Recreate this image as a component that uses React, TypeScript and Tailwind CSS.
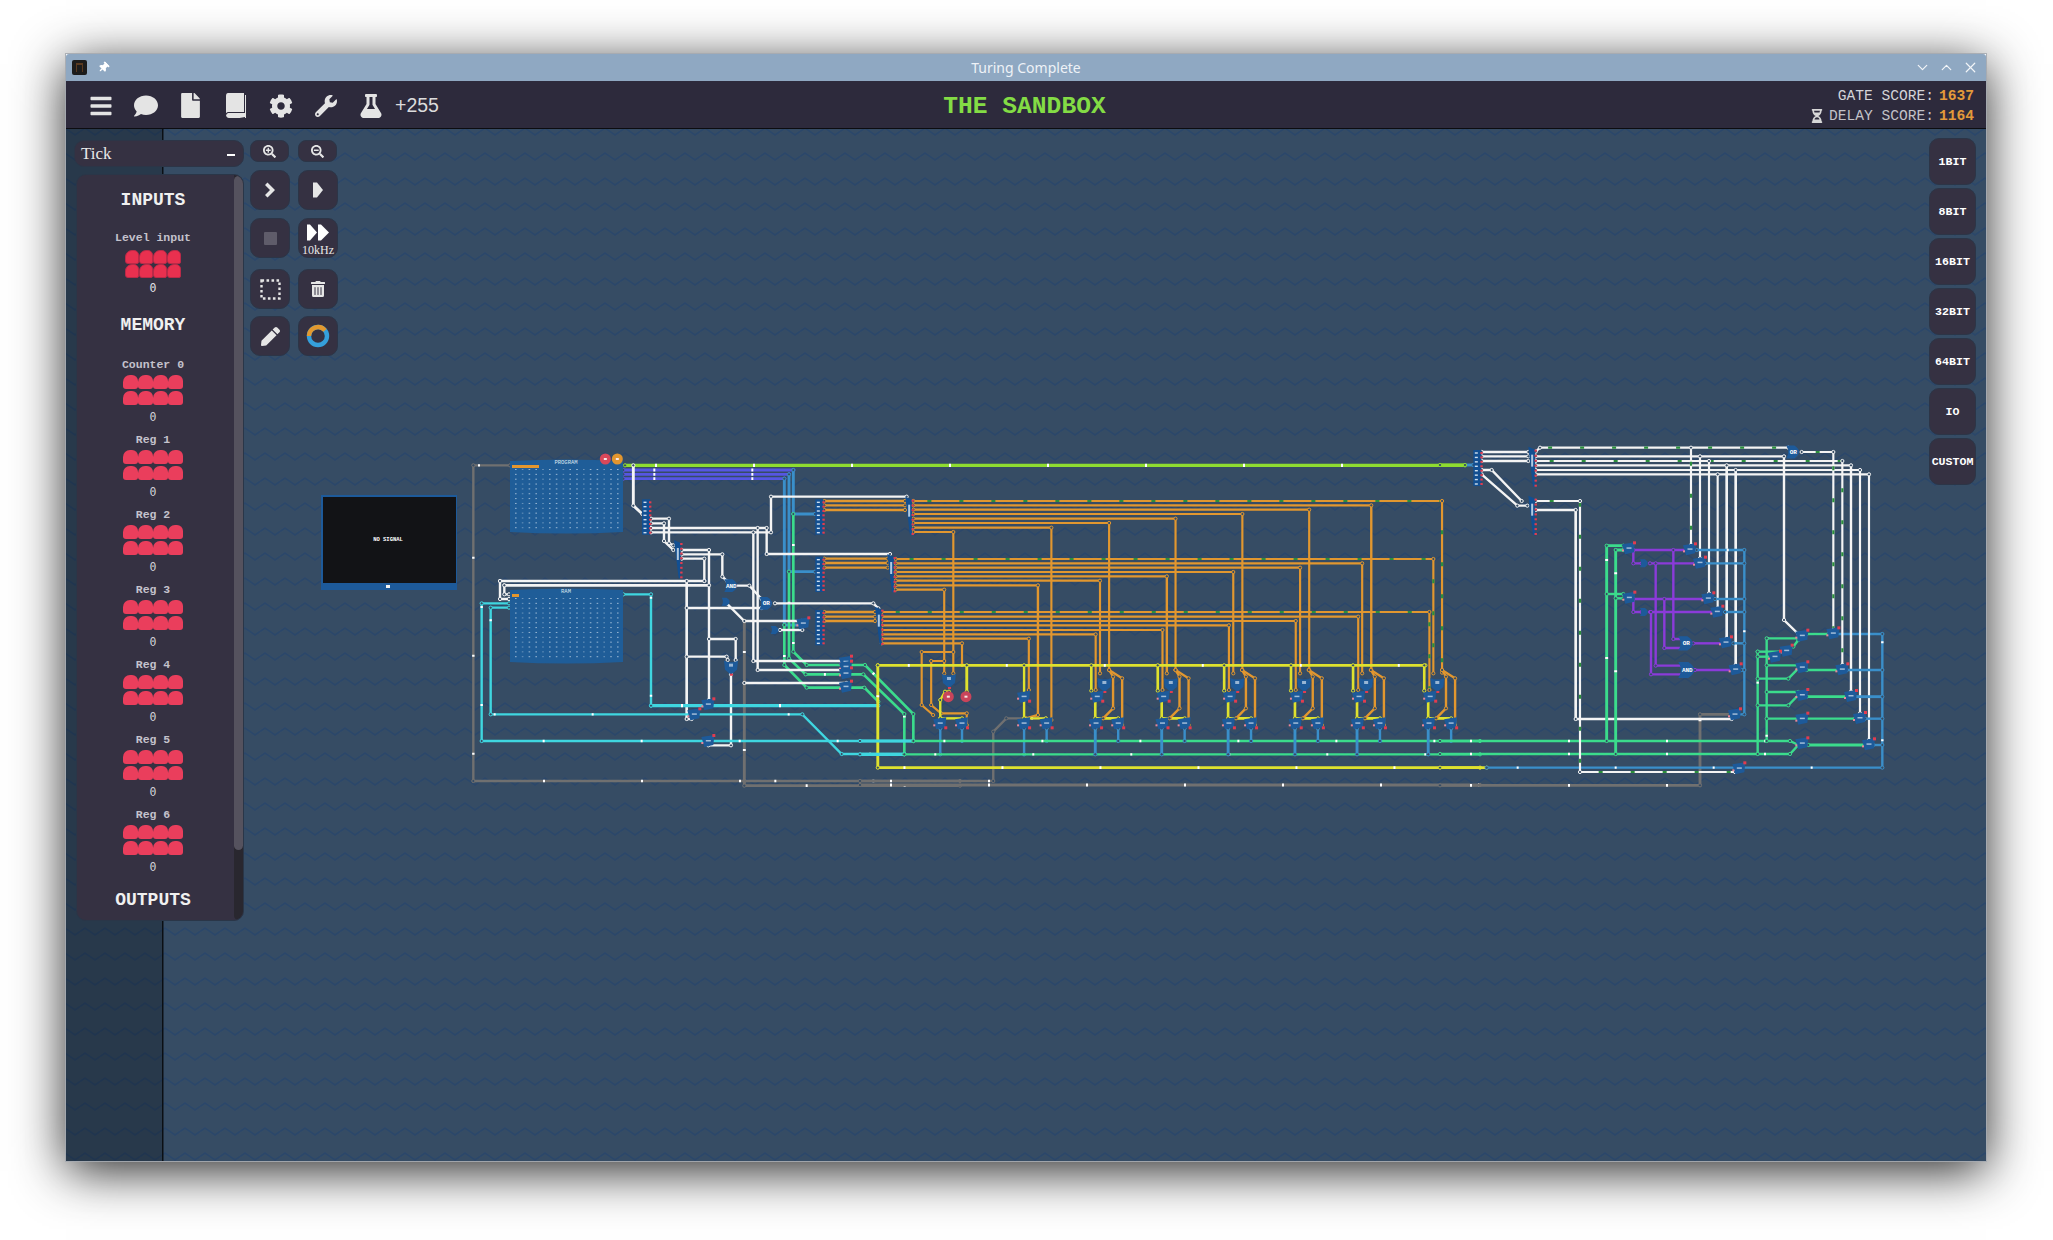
import React from 'react';
import { ChevronDown, ChevronUp, X } from 'lucide-react';
import {
  FaBars, FaCog, FaComment, FaFile, FaFlask, FaHourglassHalf, FaPen,
  FaSearchMinus, FaSearchPlus, FaThumbtack, FaTrashAlt, FaWrench,
} from 'react-icons/fa';

const WHITE = '#f4f4f4';
const ORANGE = '#e2972f';
const CYAN = '#3fd6e0';
const GREEN = '#3bdc8c';
const BLUE = '#3a8fca';
const YELLOW = '#dfe22e';
const PURPLE = '#8b3bd9';
const LIME = '#8fdc30';
const GREY = '#707070';
const INDIGO = '#5656e2';

type Map = (x: number, y: number) => [number, number];
type Wire = [string, number, number[], ('g' | 'l')?];

// each wire list is written in the coordinates of the crop it was read from
const mapA: Map = (x, y) => [460 + x / 3, 440 + y / 3];
const mapB: Map = (x, y) => [860 + x / 2.529, 480 + y / 3];
const mapC: Map = (x, y) => [1440 + x / 3, 430 + y / 3];

const wiresA: Wire[] = [
  [GREY, 2, [150, 76, 40, 76, 40, 1023, 853, 1023], 'l'],
  [GREY, 2, [853, 1023, 1500, 1023], 'l'],
  [GREY, 2.4, [853, 543, 853, 1037, 1500, 1037], 'l'],
  [INDIGO, 2.4, [490, 90, 1000, 90], 'l'],
  [INDIGO, 2.4, [490, 103, 987, 103], 'l'],
  [INDIGO, 2.4, [490, 116, 973, 116], 'l'],
  [BLUE, 2.4, [1000, 90, 1000, 222, 1065, 222]],
  [BLUE, 2.4, [987, 103, 987, 395, 1065, 395]],
  [BLUE, 2.4, [973, 116, 973, 555, 1025, 555]],
  [LIME, 2.6, [495, 76, 3015, 76], 'l'],
  [GREEN, 2.2, [1000, 222, 1000, 635, 1040, 675, 1215, 675, 1360, 822, 1360, 903], 'l'],
  [GREEN, 2.2, [987, 395, 987, 655, 1037, 703, 1210, 703, 1333, 822, 1333, 942], 'l'],
  [GREEN, 2.2, [973, 555, 973, 675, 1040, 743, 1213, 743, 1255, 785], 'l'],
  [WHITE, 2.4, [520, 76, 520, 197, 547, 222]],
  [WHITE, 2, [573, 236, 627, 236, 627, 310, 640, 316]],
  [WHITE, 2, [573, 250, 612, 250, 612, 303, 640, 330]],
  [WHITE, 2, [573, 264, 920, 264, 920, 342, 1290, 342]],
  [WHITE, 2, [573, 277, 933, 277, 933, 170, 1340, 170]],
  [WHITE, 2, [893, 264, 893, 690, 1160, 690]],
  [WHITE, 2, [880, 277, 880, 663, 1160, 663]],
  [WHITE, 2, [665, 330, 747, 330, 747, 780]],
  [WHITE, 2, [665, 343, 787, 343, 787, 410, 803, 425]],
  [WHITE, 2, [665, 356, 733, 356, 733, 423]],
  [WHITE, 2, [120, 423, 733, 423]],
  [WHITE, 2.2, [133, 436, 747, 436]],
  [WHITE, 2, [120, 423, 120, 477, 147, 477]],
  [WHITE, 2, [133, 436, 133, 463, 147, 463]],
  [WHITE, 2.2, [680, 423, 680, 837, 695, 837]],
  [WHITE, 2, [680, 504, 905, 504]],
  [WHITE, 2, [680, 650, 800, 650, 803, 660]],
  [WHITE, 2, [747, 597, 827, 597, 827, 660]],
  [WHITE, 2, [820, 437, 868, 437, 905, 477]],
  [WHITE, 2, [945, 490, 1240, 490, 1255, 505]],
  [WHITE, 2, [800, 490, 853, 543, 1025, 543]],
  [WHITE, 2, [813, 703, 813, 916, 745, 916]],
  [WHITE, 2, [853, 729, 1160, 729]],
  [WHITE, 2, [960, 570, 1027, 570]],
  [CYAN, 2, [490, 463, 573, 463, 573, 797], 'l'],
  [CYAN, 2.6, [573, 797, 1255, 797], 'l'],
  [CYAN, 2, [147, 490, 65, 490, 65, 903, 1360, 903], 'l'],
  [CYAN, 2, [147, 503, 92, 503, 92, 823, 1027, 823, 1145, 942, 1333, 942], 'l'],
  [ORANGE, 2, [1093, 183, 1335, 183]],
  [ORANGE, 2, [1093, 196, 1335, 196]],
  [ORANGE, 2, [1093, 210, 1335, 210]],
  [ORANGE, 2, [1093, 356, 1283, 356]],
  [ORANGE, 2, [1093, 369, 1283, 369]],
  [ORANGE, 2, [1093, 383, 1283, 383]],
  [ORANGE, 2, [1093, 516, 1245, 516]],
  [ORANGE, 2, [1093, 530, 1245, 530]],
  [ORANGE, 2, [1093, 543, 1245, 543]],
];

const muxBases = [585, 753, 921, 1090, 1247, 1427];

const wiresB: Wire[] = [
  [ORANGE, 1.8, [135, 63, 1472, 63, 1472, 578], 'g'],
  [ORANGE, 2, [135, 76, 1293, 76, 1293, 570]],
  [ORANGE, 1.8, [135, 89, 1136, 89, 1136, 570]],
  [ORANGE, 1.8, [135, 102, 967, 102, 967, 570]],
  [ORANGE, 1.8, [135, 116, 798, 116, 798, 570]],
  [ORANGE, 1.8, [135, 129, 630, 129, 630, 570]],
  [ORANGE, 1.8, [135, 143, 484, 143, 484, 720]],
  [ORANGE, 1.8, [135, 156, 236, 156, 236, 580]],
  [ORANGE, 1.8, [90, 237, 1450, 237, 1450, 580], 'g'],
  [ORANGE, 1.8, [90, 250, 1270, 250, 1270, 580]],
  [ORANGE, 1.8, [90, 263, 1113, 263, 1113, 580]],
  [ORANGE, 1.8, [90, 276, 944, 276, 944, 580]],
  [ORANGE, 2, [90, 289, 776, 289, 776, 580]],
  [ORANGE, 1.8, [90, 302, 607, 302, 607, 580]],
  [ORANGE, 2, [90, 316, 450, 316, 450, 705, 420, 715]],
  [ORANGE, 1.8, [90, 329, 213, 329, 213, 580]],
  [ORANGE, 1.8, [55, 396, 1440, 396, 1440, 630], 'g'],
  [ORANGE, 1.8, [55, 410, 1260, 410, 1260, 630]],
  [ORANGE, 1.8, [55, 423, 1102, 423, 1102, 630]],
  [ORANGE, 1.8, [55, 436, 933, 436, 933, 630]],
  [ORANGE, 1.8, [55, 450, 765, 450, 765, 630]],
  [ORANGE, 1.8, [55, 463, 596, 463, 596, 630]],
  [ORANGE, 1.8, [55, 476, 427, 476, 427, 630]],
  [ORANGE, 1.8, [55, 490, 258, 490, 258, 555]],
  [ORANGE, 1.8, [236, 516, 156, 516, 156, 675, 185, 705]],
  [ORANGE, 1.8, [213, 543, 180, 543, 180, 675, 205, 700, 270, 700, 270, 735]],
  [GREY, 2, [0, 903, 337, 903, 337, 755, 370, 715, 470, 715], 'l'],
  [GREY, 2.4, [0, 915, 1568, 915], 'l'],
  [YELLOW, 2.4, [45, 556, 1430, 556], 'l'],
  [YELLOW, 2.4, [45, 556, 45, 863, 1568, 863], 'l'],
  [YELLOW, 2.4, [270, 556, 270, 635]],
  [YELLOW, 2, [203, 715, 203, 660, 215, 635, 225, 635]],
  [YELLOW, 2, [203, 715, 258, 715]],
  [YELLOW, 2, [415, 556, 415, 715, 470, 715]],
  [BLUE, 2, [203, 745, 203, 823], 'l'],
  [BLUE, 2, [258, 745, 258, 783], 'l'],
  [BLUE, 2, [415, 745, 415, 823], 'l'],
  [BLUE, 2, [472, 745, 472, 783], 'l'],
  [CYAN, 2.6, [0, 783, 135, 783]],
  [CYAN, 2.6, [0, 823, 112, 823]],
  [GREEN, 2, [135, 783, 1568, 783], 'l'],
  [GREEN, 2, [112, 823, 1568, 823], 'l'],
  ...muxBases.flatMap((x): Wire[] => [
    [YELLOW, 2.2, [x, 556, x, 632]],
    [YELLOW, 2.2, [x + 10, 655, x + 10, 715, x + 68, 715]],
    [ORANGE, 2, [x + 45, 570, x + 78, 595, x + 78, 735]],
    [ORANGE, 2, [x + 45, 570, x + 55, 590, x + 55, 685, x + 30, 715]],
    [BLUE, 2.4, [x + 10, 745, x + 10, 823], 'l'],
    [BLUE, 2, [x + 68, 745, x + 68, 783], 'l'],
  ]),
];

const wiresC: Wire[] = [
  [BLUE, 2.4, [75, 105, 100, 105]],
  [LIME, 2.6, [0, 105, 75, 105]],
  [GREY, 2.4, [0, 1066, 780, 1066, 780, 853, 870, 853], 'l'],
  [GREEN, 2, [0, 933, 1050, 933, 1075, 945], 'l'],
  [GREEN, 2, [0, 972, 1050, 972, 1075, 945], 'l'],
  [YELLOW, 2.4, [0, 1013, 140, 1013]],
  [BLUE, 2, [140, 1013, 1327, 1013, 1327, 612, 1180, 612], 'l'],
  [WHITE, 2, [125, 66, 265, 66]],
  [WHITE, 2, [125, 79, 265, 79]],
  [WHITE, 2, [125, 93, 265, 93]],
  [WHITE, 2, [125, 120, 155, 120, 245, 213]],
  [WHITE, 2, [125, 133, 232, 227, 262, 227]],
  [WHITE, 1.8, [287, 65, 300, 53, 1045, 53], 'g'],
  [WHITE, 2, [287, 79, 1032, 79, 1032, 570, 1075, 612]],
  [WHITE, 1.8, [287, 93, 1207, 93, 1207, 705], 'g'],
  [WHITE, 2, [287, 106, 1233, 106, 1233, 785]],
  [WHITE, 1.8, [287, 120, 1260, 120, 1260, 850]],
  [WHITE, 1.8, [287, 133, 1287, 133, 1287, 930]],
  [WHITE, 1.8, [753, 53, 753, 345], 'g'],
  [WHITE, 1.8, [780, 79, 780, 385]],
  [WHITE, 1.8, [807, 93, 807, 490]],
  [WHITE, 1.8, [833, 133, 833, 535]],
  [WHITE, 2.2, [860, 106, 860, 625]],
  [WHITE, 2.2, [887, 120, 887, 705]],
  [WHITE, 1.8, [1085, 66, 1180, 66, 1180, 600], 'g'],
  [WHITE, 1.8, [287, 213, 420, 213, 420, 1026, 885, 1026], 'g'],
  [WHITE, 2.2, [287, 240, 407, 240, 407, 867, 875, 867]],
  [GREEN, 2.4, [550, 347, 500, 347, 500, 933], 'l'],
  [GREEN, 2.4, [550, 360, 527, 360, 527, 972], 'l'],
  [GREEN, 2, [500, 492, 550, 492]],
  [GREEN, 2, [527, 505, 550, 505]],
  [PURPLE, 2, [580, 360, 740, 360]],
  [PURPLE, 2, [580, 360, 580, 400, 605, 400]],
  [PURPLE, 2, [630, 400, 765, 400]],
  [PURPLE, 2, [647, 400, 647, 707, 725, 707]],
  [PURPLE, 2, [580, 507, 790, 507]],
  [PURPLE, 2, [580, 507, 580, 546, 605, 546]],
  [PURPLE, 2, [630, 546, 820, 546]],
  [PURPLE, 2, [633, 546, 633, 733, 725, 733]],
  [PURPLE, 2, [700, 360, 700, 627, 725, 627]],
  [PURPLE, 2, [673, 507, 673, 654, 725, 654]],
  [PURPLE, 2, [760, 640, 845, 640]],
  [PURPLE, 2.2, [765, 720, 875, 720]],
  [BLUE, 2, [770, 360, 913, 360, 913, 853, 890, 853], 'l'],
  [BLUE, 2, [795, 400, 913, 400]],
  [BLUE, 2, [825, 507, 913, 507]],
  [BLUE, 2, [855, 546, 913, 546]],
  [BLUE, 2, [880, 640, 913, 640]],
  [BLUE, 2, [905, 720, 913, 720]],
  [BLUE, 2, [1220, 720, 1327, 720]],
  [BLUE, 2.4, [1245, 800, 1327, 800]],
  [BLUE, 2, [1275, 866, 1327, 866]],
  [BLUE, 2, [1300, 945, 1327, 945]],
  [GREEN, 2, [1075, 625, 980, 625, 980, 933], 'l'],
  [GREEN, 2, [953, 665, 1030, 665]],
  [GREEN, 2, [953, 665, 953, 972], 'l'],
  [GREEN, 2, [953, 680, 1000, 680]],
  [GREEN, 2, [980, 706, 1075, 706]],
  [GREEN, 2, [953, 746, 1045, 746, 1075, 715]],
  [GREEN, 2, [980, 786, 1075, 786]],
  [GREEN, 2, [953, 826, 1045, 826, 1075, 795]],
  [GREEN, 2, [980, 866, 1245, 866]],
  [GREEN, 2, [1100, 612, 1165, 612]],
  [GREEN, 2, [1100, 720, 1195, 720]],
  [GREEN, 2.4, [1100, 800, 1220, 800]],
  [GREEN, 2.4, [1105, 945, 1275, 945]],
  [GREEN, 2, [1060, 650, 1075, 630]],
];

function Wires({ wires, map }: { wires: Wire[]; map: Map }) {
  return (
    <g fill="none">
      {wires.map(([color, width, pts, mark], i) => {
        const points: [number, number][] = [];
        for (let k = 0; k < pts.length; k += 2) points.push(map(pts[k], pts[k + 1]));
        const line = points.map((p) => p.join(',')).join(' ');
        const w = width * 1.2;
        return (
          <g key={i}>
            <polyline points={line} stroke={color} strokeWidth={w} />
            {mark === 'g' && <polyline points={line} stroke="#2b8f3c" strokeWidth={w} strokeDasharray="4 28" strokeDashoffset={-14} />}
            {mark === 'l' && <polyline points={line} stroke="#ffffff" strokeWidth={w} strokeDasharray="2 96" strokeDashoffset={-30} />}
            {points.map((p, k) => (
              <circle key={k} cx={p[0]} cy={p[1]} r={1.6} fill="#364c64" stroke={color} strokeWidth={1} />
            ))}
          </g>
        );
      })}
    </g>
  );
}

function Mux({ at, pin = 'top' }: { at: [number, number]; pin?: 'top' | 'bottom' }) {
  const [x, y] = at;
  return (
    <g>
      <path d={`M${x - 7} ${y - 4} L${x + 6} ${y - 6} L${x + 5} ${y + 4} L${x - 4} ${y + 6} Z`} fill="#1d5a9a" />
      <rect x={x - 2.5} y={y - 1} width={5} height={1.5} fill="#d9e6f2" opacity={0.7} />
      <rect x={x + 4} y={pin === 'top' ? y - 7 : y + 3} width={3} height={3} fill="#e23c4f" />
      <rect x={x - 7} y={y + 1} width={2} height={2} fill="#e9879a" />
    </g>
  );
}

function Gate({ at, label, r = 8 }: { at: [number, number]; label: string; r?: number }) {
  const [x, y] = at;
  return (
    <g>
      <path d={`M${x - r} ${y - r * 0.8} H${x} Q${x + r * 1.2} ${y} ${x} ${y + r * 0.8} H${x - r} Q${x - r * 0.5} ${y} ${x - r} ${y - r * 0.8} Z`} fill="#1d5a9a" />
      <text x={x - 1} y={y + 2} textAnchor="middle" fontSize={6} fontWeight={700} fontFamily="Liberation Mono, monospace" fill="#ffffff">{label}</text>
    </g>
  );
}

// down pointing gate of the bit columns
function DownGate({ at }: { at: [number, number] }) {
  const [x, y] = at;
  return (
    <g>
      <path d={`M${x - 7} ${y - 6} Q${x} ${y - 3} ${x + 7} ${y - 6} L${x + 6} ${y + 3} L${x} ${y + 8} L${x - 6} ${y + 3} Z`} fill="#1d5a9a" />
      <rect x={x - 2} y={y - 3} width={4} height={3} fill="#d9e6f2" opacity={0.65} />
      <rect x={x - 1} y={y + 7} width={3} height={2} fill="#e23c4f" />
    </g>
  );
}

function Decoder({ map, x, y, h = 106 }: { map: Map; x: number; y: number; h?: number }) {
  const [ax, ay] = map(x, y);
  const [bx, by] = map(x + 24, y + h);
  const n = 8;
  return (
    <g>
      <rect x={ax} y={ay} width={bx - ax} height={by - ay} fill="#124f92" />
      {Array.from({ length: n }, (_, i) => {
        const py = ay + 3 + (i * (by - ay - 5)) / (n - 1);
        return (
          <g key={i}>
            <rect x={ax + 1.5} y={py - 0.7} width={3} height={1.4} fill="#cfe0f0" />
            <rect x={bx - 1} y={py - 1} width={2.4} height={2} fill="#e23c4f" />
          </g>
        );
      })}
    </g>
  );
}

function Demux({ map, x, y, w = 20, h = 112 }: { map: Map; x: number; y: number; w?: number; h?: number }) {
  const [ax, ay] = map(x, y);
  const [bx, by] = map(x + w, y + h);
  return (
    <g>
      <path d={`M${ax} ${ay} L${bx} ${ay + 3} L${bx} ${by} L${bx - 2} ${by} Z`} fill="#124f92" />
      <rect x={(ax + bx) / 2 - 0.5} y={ay + 8} width={2} height={12} fill="#cfe0f0" opacity={0.85} />
      {Array.from({ length: 8 }, (_, i) => (
        <rect key={i} x={bx - 0.5} y={ay + 3 + i * ((by - ay - 5) / 7)} width={2.4} height={2} fill="#e23c4f" />
      ))}
    </g>
  );
}

function MemoryBlock({ x, y, h, rows, label, bar }: { x: number; y: number; h: number; rows: number; label: string; bar: number }) {
  return (
    <g>
      <path d={`M${x} ${y + 1} Q${x + 56} ${y - 2} ${x + 113} ${y + 1} V${y + h - 1} Q${x + 56} ${y + h + 2} ${x} ${y + h - 1} Z`} fill="#1f5d98" />
      <rect x={x + 2} y={y + 5} width={bar} height={3} fill="#e2972f" />
      {Array.from({ length: rows }, (_, r) =>
        Array.from({ length: 16 }, (_, c) => (
          <rect key={`${r}-${c}`} x={x + 5 + c * 6.8} y={y + 9 + r * 4.85} width={1.6} height={1} fill="#d8e6f2" opacity={c % 3 === 1 ? 0.4 : 0.65} />
        )),
      )}
      <text x={x + 56} y={y + 4} textAnchor="middle" fontSize={5.5} fontFamily="Liberation Mono, monospace" fill="#dbe6f0">{label}</text>
    </g>
  );
}

function Led({ at, color, r = 5.5 }: { at: [number, number]; color: string; r?: number }) {
  return (
    <g>
      <circle cx={at[0]} cy={at[1]} r={r} fill={color} />
      <rect x={at[0] - 1.5} y={at[1] - 1} width={3} height={2} fill="#f6e6e6" />
    </g>
  );
}

function Canvas() {
  return (
    <svg className="absolute inset-0" width={1920} height={1032} viewBox="66 129 1920 1032">
      <defs>
        <pattern id="waves" x={0} y={0} width={20} height={25} patternUnits="userSpaceOnUse">
          <path d="M0 6.5 L5 3 L15 10 L20 6.5" fill="none" stroke="#2b476a" strokeWidth={1.7} />
        </pattern>
      </defs>
      <rect x={66} y={129} width={1920} height={1032} fill="#364c64" />
      <rect x={66} y={129} width={1920} height={1032} fill="url(#waves)" />
      <rect x={66} y={129} width={97} height={1032} fill="#000000" opacity={0.25} />
      <rect x={162} y={129} width={1.5} height={1032} fill="#0b0f14" />

      {/* console */}
      <rect x={321} y={495} width={136} height={95} fill="#1d5a9a" />
      <rect x={323} y={497} width={133} height={86} fill="#121316" />
      <rect x={386} y={585} width={4} height={3} fill="#f4f4f4" />
      <text x={388} y={541} textAnchor="middle" fontSize={5.5} fontWeight={700} fontFamily="Liberation Mono, monospace" fill="#ffffff">NO SIGNAL</text>

      <Wires wires={wiresA} map={mapA} />
      <Wires wires={wiresB} map={mapB} />
      <Wires wires={wiresC} map={mapC} />

      <MemoryBlock x={510} y={460} h={73} rows={13} label="PROGRAM" bar={27} />
      <MemoryBlock x={510} y={589} h={74} rows={13} label="RAM" bar={7} />
      <Led at={mapA(436, 57)} color="#d9485a" />
      <Led at={mapA(472, 57)} color="#e2962f" />
      <Led at={mapA(1465, 770)} color="#c9445a" />
      <Led at={mapB(268, 650)} color="#c9445a" />

      <Decoder map={mapA} x={546} y={178} />
      <Decoder map={mapA} x={1066} y={178} />
      <Decoder map={mapA} x={1066} y={350} />
      <Decoder map={mapA} x={1066} y={510} />
      <Decoder map={mapC} x={100} y={60} h={108} />
      <Demux map={mapA} x={642} y={300} h={115} />
      <Demux map={mapA} x={1336} y={170} h={115} />
      <Demux map={mapA} x={1282} y={342} h={115} />
      <Demux map={mapA} x={1245} y={500} h={115} />
      <Demux map={mapC} x={265} y={50} h={120} />
      <Demux map={mapC} x={265} y={197} h={118} />

      <Gate at={mapA(817, 437)} label="AND" />
      <Gate at={mapA(922, 490)} label="OR" />
      <Gate at={mapA(800, 485)} label="" r={5} />
      <Gate at={mapA(947, 570)} label="" r={5} />
      <DownGate at={mapA(813, 680)} />
      {([[745, 793], [703, 823], [745, 903], [1030, 550], [1158, 665], [1158, 680], [1158, 700], [1158, 740]] as [number, number][]).map((p, i) => (
        <Mux key={i} at={mapA(p[0], p[1])} />
      ))}
      <DownGate at={mapB(225, 600)} />
      <Mux at={mapB(415, 650)} pin="bottom" />
      {[203, 258, 415, 472].map((x) => (
        <Mux key={x} at={mapB(x, 730)} pin="bottom" />
      ))}
      {muxBases.map((x) => (
        <g key={x}>
          <DownGate at={mapB(x + 33, 612)} />
          <Mux at={mapB(x + 15, 650)} pin="bottom" />
          <Mux at={mapB(x + 12, 730)} pin="bottom" />
          <Mux at={mapB(x + 68, 730)} pin="bottom" />
        </g>
      ))}
      <Gate at={mapC(742, 640)} label="OR" r={9} />
      <Gate at={mapC(745, 720)} label="AND" r={10} />
      <Gate at={mapC(1063, 66)} label="OR" r={8} />
      <Gate at={mapC(615, 400)} label="" r={5} />
      <Gate at={mapC(615, 546)} label="" r={5} />
      {([[567, 355], [568, 503], [750, 358], [780, 398], [805, 505], [832, 545], [858, 637], [887, 718], [885, 853], [1180, 610], [1207, 718], [1233, 798], [1260, 864], [1287, 943], [1087, 617], [1040, 662], [1005, 680], [1087, 712], [1087, 795], [1087, 866], [1087, 940], [898, 1015]] as [number, number][]).map((p, i) => (
        <Mux key={i} at={mapC(p[0], p[1])} />
      ))}
    </svg>
  );
}

function Nibs({ small }: { small?: boolean }) {
  return (
    <div className={small ? 'grid grid-cols-[repeat(4,14px)] auto-rows-[14px]' : 'grid grid-cols-[repeat(4,15px)] auto-rows-[16px]'}>
      {Array.from({ length: 8 }, (_, i) => (
        <div
          key={i}
          className={
            small
              ? 'w-[14px] h-[14px] rounded-tl-[7px] rounded-tr-[5px] rounded-br-[2px] rounded-bl-[3px] bg-[#e9304f] border border-[#b92a48]'
              : 'w-[14.5px] h-[14px] rounded-tl-[7px] rounded-tr-[6px] rounded-br-[3px] rounded-bl-[3px] bg-[#ea3e5c]'
          }
        />
      ))}
    </div>
  );
}

function Heading({ children, className }: { children: string; className: string }) {
  return <div className={`font-['Liberation_Mono',monospace] font-bold text-[18px] leading-[24px] text-[#f0f0f0] ${className}`}>{children}</div>;
}

function Component({ name, first }: { name: string; first?: boolean }) {
  return (
    <div className={first ? 'flex flex-col items-center mt-[21px]' : 'flex flex-col items-center mt-[9px]'}>
      <div className="font-['Liberation_Mono',monospace] font-bold text-[11.5px] leading-[14px] text-[#c4c2cc]">{name}</div>
      <div className="mt-[3px]">
        <Nibs />
      </div>
      <div className="mt-[3px] font-['DejaVu_Sans_Mono',monospace] text-[11.5px] leading-[14px] text-[#d0d0d6]">0</div>
    </div>
  );
}

function Panel() {
  return (
    <div className="flex h-[747px] w-[168px] ml-[2px] mt-[7px] bg-[#353142] border border-[#2a3648] rounded-[10px] overflow-hidden">
      <div className="flex-1 flex flex-col items-center pt-[13px] pr-[5px]">
        <Heading className="">INPUTS</Heading>
        <div className="mt-[19px] font-['Liberation_Mono',monospace] font-bold text-[11.5px] leading-[14px] text-[#c4c2cc]">Level input</div>
        <div className="mt-[5px]">
          <Nibs small />
        </div>
        <div className="mt-[3px] font-['DejaVu_Sans_Mono',monospace] text-[11.5px] leading-[14px] text-[#e0e0e6]">0</div>
        <Heading className="mt-[18px]">MEMORY</Heading>
        <Component name="Counter 0" first />
        {['Reg 1', 'Reg 2', 'Reg 3', 'Reg 4', 'Reg 5', 'Reg 6'].map((n) => (
          <Component key={n} name={n} />
        ))}
        <Heading className="mt-[14px]">OUTPUTS</Heading>
      </div>
      <div className="w-[9px] bg-[#29272f] rounded-b-[6px]">
        <div className="h-[674px] mt-[1px] bg-[#55525e] rounded-[5px]" />
      </div>
    </div>
  );
}

function ToolButton({ children, className = '' }: { children: React.ReactNode; className?: string }) {
  return (
    <div className={`w-[40px] h-[40px] flex flex-col items-center justify-center bg-[#353142] border border-[#2c3547] rounded-[10px] text-[#e6e6e6] ${className}`}>
      {children}
    </div>
  );
}

function ZoomButton({ children }: { children: React.ReactNode }) {
  return (
    <div className="w-[39px] h-[22px] flex items-center justify-center bg-[#353142] border border-[#2c3547] rounded-[8px] text-[#e6e6e6]">
      {children}
    </div>
  );
}

function Tools() {
  return (
    <div className="flex flex-col ml-[6px]">
      <div className="flex gap-[9px]">
        <ZoomButton><FaSearchPlus size={13} /></ZoomButton>
        <ZoomButton><FaSearchMinus size={13} /></ZoomButton>
      </div>
      <div className="flex gap-[8px] mt-[8px]">
        <ToolButton>
          <svg width="12" height="16" viewBox="0 0 12 16"><path d="M1 3 L3.5 0.5 L11 8 L3.5 15.5 L1 13 L6 8 Z" fill="#e6e6e6" strokeLinejoin="round" /></svg>
        </ToolButton>
        <ToolButton>
          <svg width="12" height="16" viewBox="0 0 12 16"><path d="M1 0.5 H5 L11 8 L5 15.5 H1 Z" fill="#e6e6e6" /></svg>
        </ToolButton>
      </div>
      <div className="flex gap-[8px] mt-[8px]">
        <ToolButton><div className="w-[13px] h-[13px] rounded-[1px] bg-[#5f5c6a]" /></ToolButton>
        <ToolButton>
          <svg width="24" height="17" viewBox="0 0 24 17"><path d="M1 0.5 H4 L11 8.5 L4 16.5 H1 Z M12 0.5 H15 L23 8.5 L15 16.5 H12 L12 0.5 Z" fill="#ffffff" /></svg>
          <span className="font-['Liberation_Serif',serif] text-[12px] leading-[12px] mt-[3px] -mb-[3px] text-[#e8e8e8]">10kHz</span>
        </ToolButton>
      </div>
      <div className="flex gap-[8px] mt-[11px]">
        <ToolButton>
          <svg width="21" height="21" viewBox="0 0 21 21"><rect x="1.5" y="1.5" width="18" height="18" fill="none" stroke="#e6e6e6" strokeWidth="2.4" strokeDasharray="2.6 2.4" /></svg>
        </ToolButton>
        <ToolButton><FaTrashAlt size={16} /></ToolButton>
      </div>
      <div className="flex gap-[8px] mt-[7px]">
        <ToolButton><FaPen size={19} /></ToolButton>
        <ToolButton>
          <svg width="24" height="24" viewBox="0 0 24 24">
            <circle cx="12" cy="12" r="9" fill="none" stroke="#35a0dc" strokeWidth="4.4" />
            <path d="M3 12 A9 9 0 0 1 19 6.4" fill="none" stroke="#e2982f" strokeWidth="4.4" />
          </svg>
        </ToolButton>
      </div>
    </div>
  );
}

function BitButton({ label }: { label: string }) {
  return (
    <div className="w-[47px] h-[47px] flex items-center justify-center bg-[#353142] border border-[#2c3547] rounded-[10px] font-['Liberation_Mono',monospace] font-bold text-[11.6px] text-white">
      {label}
    </div>
  );
}

function TitleBar() {
  return (
    <div className="relative h-[27px] flex items-center justify-between bg-[#8fa8c2] rounded-t-[3px] px-[6px]">
      <div className="flex items-center gap-[11px]">
        <div className="w-[15px] h-[15px] rounded-[2px] bg-[#1c1c1c] flex items-center justify-center">
          <div className="w-[7px] h-[9px] border-t-2 border-x border-[#5a3a20]" />
        </div>
        <FaThumbtack size={11} className="text-white rotate-45" />
      </div>
      <span className="absolute inset-x-0 text-center font-['Noto_Sans',sans-serif] text-[14px] text-[#eef2f7]">Turing Complete</span>
      <div className="flex items-center gap-[7px] text-[#f2f5f8] pr-[1px]">
        <ChevronDown size={17} strokeWidth={1.7} />
        <ChevronUp size={17} strokeWidth={1.7} />
        <X size={17} strokeWidth={1.7} />
      </div>
    </div>
  );
}

function BookIcon() {
  return (
    <svg width="22" height="26" viewBox="0 0 22 26" fill="#e4e4e4">
      <path d="M3 0 H19 V19 H4 C2.4 19 1 19.6 1 20.6 V3 C1 1.2 1.8 0 3 0 Z" />
      <path d="M1 21.5 C1 23.8 2.2 25 4 25 H21 V2 H20 V20 H4.2 C2.4 20 1.8 20.6 1.8 21.5 C1.8 23 2.8 24 4.2 24 H20 V25 Z" />
    </svg>
  );
}

function TopBar() {
  const icons = [
    <FaBars size={24} />, <FaComment size={24} />, <FaFile size={25} />, <BookIcon />,
    <FaCog size={24} />, <FaWrench size={22} />, <FaFlask size={24} />,
  ];
  return (
    <div className="h-[48px] pt-[2px] grid grid-cols-[1fr_auto_1fr] items-center bg-[#2d2a3c] border-b-[1.5px] border-[#0c0c10]">
      <div className="flex items-center pl-[12px]">
        {icons.map((icon, i) => (
          <div key={i} className="w-[45px] flex justify-center text-[#e4e4e4]">{icon}</div>
        ))}
        <span className="ml-[2px] font-['Liberation_Sans',sans-serif] text-[19.5px] text-[#dcdcdc]">+255</span>
      </div>
      <div className="mt-[4px] -ml-[3px] font-['Liberation_Mono',monospace] font-bold text-[24.6px] text-[#83dc45]">THE SANDBOX</div>
      <div className="flex flex-col items-end pr-[12px] font-['Liberation_Mono',monospace] text-[14.6px] leading-[20px]">
        <div className="flex items-center text-[#d4d4d8]">
          GATE SCORE:<span className="ml-[5px] font-bold text-[#e39a3a]">1637</span>
        </div>
        <div className="flex items-center text-[#c2c2c8]">
          <FaHourglassHalf size={14} className="mr-[5px] text-[#d8d8d8]" />
          DELAY SCORE:<span className="ml-[5px] font-bold text-[#e39a3a]">1164</span>
        </div>
      </div>
    </div>
  );
}

export default function App() {
  return (
    <div className="w-[2053px] h-[1240px] bg-white pl-[66px] pt-[54px] overflow-hidden">
      <div className="w-[1920px] h-[1107px] flex flex-col shadow-[0_0_0_1px_rgba(165,170,176,0.9),0_10px_48px_rgba(0,0,0,0.85)]">
        <TitleBar />
        <TopBar />
        <div className="relative flex-1 flex justify-between items-start pl-[8px] pr-[10px] pt-[9px]">
          <Canvas />
          <div className="relative flex items-start mt-[2px]">
            <div className="flex flex-col">
              <div className="w-[170px] h-[27px] flex items-center justify-between px-[6px] bg-[#353142] border border-[#2c3547] rounded-[10px]">
                <span className="font-['Liberation_Serif',serif] text-[17px] text-[#e8e8e8]">Tick</span>
                <div className="w-[8px] h-[2px] mt-[3px] mr-[2px] bg-white" />
              </div>
              <Panel />
            </div>
            <Tools />
          </div>
          <div className="relative flex flex-col gap-[3px]">
            {['1BIT', '8BIT', '16BIT', '32BIT', '64BIT', 'IO', 'CUSTOM'].map((b) => (
              <BitButton key={b} label={b} />
            ))}
          </div>
        </div>
      </div>
    </div>
  );
}
